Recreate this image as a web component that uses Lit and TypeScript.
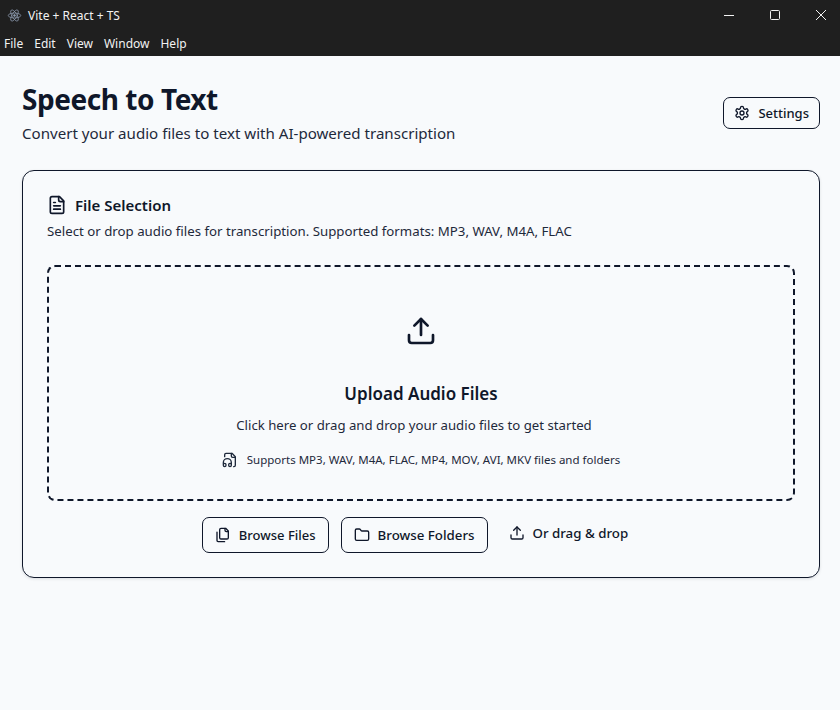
import { LitElement, html, css, svg } from "lit";
import { customElement } from "lit/decorators.js";

const ic = (size: number, body: unknown, sw = 2) => html`<svg xmlns="http://www.w3.org/2000/svg" width=${size} height=${size} viewBox="0 0 24 24" fill="none" stroke="currentColor" stroke-width=${sw} stroke-linecap="round" stroke-linejoin="round">${body}</svg>`;

const upload = svg`<path d="M21 15v4a2 2 0 0 1-2 2H5a2 2 0 0 1-2-2v-4"/><polyline points="17 8 12 3 7 8"/><line x1="12" x2="12" y1="3" y2="15"/>`;
const gear = svg`<path d="M12.22 2h-.44a2 2 0 0 0-2 2v.18a2 2 0 0 1-1 1.73l-.43.25a2 2 0 0 1-2 0l-.15-.08a2 2 0 0 0-2.73.73l-.22.38a2 2 0 0 0 .73 2.73l.15.1a2 2 0 0 1 1 1.72v.51a2 2 0 0 1-1 1.74l-.15.09a2 2 0 0 0-.73 2.73l.22.38a2 2 0 0 0 2.73.73l.15-.08a2 2 0 0 1 2 0l.43.25a2 2 0 0 1 1 1.73V20a2 2 0 0 0 2 2h.44a2 2 0 0 0 2-2v-.18a2 2 0 0 1 1-1.73l.43-.25a2 2 0 0 1 2 0l.15.08a2 2 0 0 0 2.73-.73l.22-.39a2 2 0 0 0-.73-2.73l-.15-.08a2 2 0 0 1-1-1.74v-.5a2 2 0 0 1 1-1.74l.15-.09a2 2 0 0 0 .73-2.73l-.22-.38a2 2 0 0 0-2.73-.73l-.15.08a2 2 0 0 1-2 0l-.43-.25a2 2 0 0 1-1-1.73V4a2 2 0 0 0-2-2z"/><circle cx="12" cy="12" r="3"/>`;
const fileText = svg`<path d="M15 2H6a2 2 0 0 0-2 2v16a2 2 0 0 0 2 2h12a2 2 0 0 0 2-2V7Z"/><path d="M14 2v4a2 2 0 0 0 2 2h4"/><path d="M10 9H8"/><path d="M16 13H8"/><path d="M16 17H8"/>`;
const fileAudio = svg`<path d="M17.5 22h.5a2 2 0 0 0 2-2V7l-5-5H6a2 2 0 0 0-2 2v3"/><path d="M14 2v4a2 2 0 0 0 2 2h4"/><path d="M2 19a2 2 0 1 1 4 0v1a2 2 0 1 1-4 0v-4a6 6 0 0 1 12 0v4a2 2 0 1 1-4 0v-1a2 2 0 1 1 4 0"/>`;
const files = svg`<path d="M20 7h-3a2 2 0 0 1-2-2V2"/><path d="M9 18a2 2 0 0 1-2-2V4a2 2 0 0 1 2-2h7l4 4v10a2 2 0 0 1-2 2Z"/><path d="M3 7.6v12.8A1.6 1.6 0 0 0 4.6 22h9.8"/>`;
const folder = svg`<path d="M20 20a2 2 0 0 0 2-2V8a2 2 0 0 0-2-2h-7.9a2 2 0 0 1-1.69-.9L9.6 3.9A2 2 0 0 0 7.93 3H4a2 2 0 0 0-2 2v13a2 2 0 0 0 2 2Z"/>`;

@customElement("app-root")
export class AppRoot extends LitElement {
  static styles = css`
    :host { display: flex; flex-direction: column; height: 710px; overflow: hidden; background: #f8fafc; color: #0f172a; font-family: "Noto Sans", "Open Sans", sans-serif; }
    .chrome { background: #1f1f1f; color: #f2f2f2; height: 56px; flex: none; font-size: 12px; overflow: hidden; }
    .titlebar { height: 30px; display: flex; align-items: center; padding-left: 7px; }
    .logo { width: 15px; height: 15px; margin-right: 6px; color: #8d9bb0; display: block; }
    .wname { flex: 1; }
    .wc { display: flex; align-items: center; margin-right: -4px; }
    .wc span { width: 46px; height: 30px; display: flex; align-items: center; justify-content: center; }
    .menu { height: 26px; display: flex; align-items: center; padding-left: 4px; gap: 11px; }
    main { padding: 25px 20px 0 22px; }
    .head { display: flex; justify-content: space-between; align-items: flex-start; margin-bottom: 25px; }
    .head .btn { margin-top: 16px; height: 32px; padding: 0 10px; }
    h1 { margin: 0; font-size: 28px; line-height: 36px; font-weight: 700; letter-spacing: -0.45px; }
    .sub { margin-top: 4px; font-size: 15.1px; line-height: 24px; color: #1e293b; }
    .btn { display: inline-flex; align-items: center; gap: 8px; height: 36px; box-sizing: border-box; padding: 0 12px; border: 1px solid #0f172a; border-radius: 7px; background: #f8fafc; font: inherit; font-size: 13px; font-weight: 500; color: #0f172a; }
    .btn.wide { font-size: 13.3px; }
    .card { border: 1px solid #0f172a; border-radius: 12px; height: 408px; box-sizing: border-box; padding: 24px; box-shadow: 0 1px 3px rgba(15,23,42,.12); }
    .ct { display: flex; align-items: center; gap: 8px; font-size: 15px; font-weight: 600; line-height: 20px; }
    .cd { margin-top: 6px; font-size: 13.25px; line-height: 20px; color: #1e293b; }
    .drop { margin-top: 24px; height: 236px; box-sizing: border-box; border: 2px dashed #0f172a; border-radius: 8px; display: flex; flex-direction: column; align-items: center; padding-top: 48px; }
    .drop h3 { margin: 33px 0 0; font-size: 17px; line-height: 28px; font-weight: 600; }
    .drop p { margin: 7px 0 0; padding-right: 14px; font-size: 13.2px; line-height: 20px; color: #1e293b; }
    .sup { display: flex; align-items: center; gap: 9px; margin-top: 17px; font-size: 11.5px; line-height: 16px; color: #1e293b; }
    .actions { display: flex; justify-content: center; align-items: center; gap: 12px; margin-top: 16px; }
    .plain { display: inline-flex; align-items: center; gap: 8px; padding: 0 12px 4px 9px; height: 36px; box-sizing: border-box; font-size: 13.3px; font-weight: 500; }
  `;
  render() {
    return html`
      <div class="chrome">
        <div class="titlebar">
          <svg class="logo" viewBox="0 0 24 24" fill="none" stroke="currentColor" stroke-width="1.2">
            <ellipse cx="12" cy="12" rx="10" ry="4"/>
            <ellipse cx="12" cy="12" rx="10" ry="4" transform="rotate(60 12 12)"/>
            <ellipse cx="12" cy="12" rx="10" ry="4" transform="rotate(120 12 12)"/>
            <circle cx="12" cy="12" r="1.5" fill="currentColor"/>
          </svg>
          <span class="wname">Vite + React + TS</span>
          <div class="wc">
            <span><svg width="12" height="12" viewBox="0 0 12 12"><path d="M1 6.5h10" stroke="#f2f2f2"/></svg></span>
            <span><svg width="12" height="12" viewBox="0 0 12 12" fill="none"><rect x="1.5" y="1.5" width="9" height="9" rx="1" stroke="#f2f2f2"/></svg></span>
            <span><svg width="12" height="12" viewBox="0 0 12 12"><path d="M1 1l10 10M11 1L1 11" stroke="#f2f2f2"/></svg></span>
          </div>
        </div>
        <div class="menu"><span>File</span><span>Edit</span><span>View</span><span>Window</span><span>Help</span></div>
      </div>
      <main>
        <div class="head">
          <div>
            <h1>Speech to Text</h1>
            <div class="sub">Convert your audio files to text with AI-powered transcription</div>
          </div>
          <button class="btn">${ic(16, gear)}Settings</button>
        </div>
        <section class="card">
          <div class="ct">${ic(20, fileText)}File Selection</div>
          <div class="cd">Select or drop audio files for transcription. Supported formats: MP3, WAV, M4A, FLAC</div>
          <div class="drop">
            ${ic(32, upload)}
            <h3>Upload Audio Files</h3>
            <p>Click here or drag and drop your audio files to get started</p>
            <div class="sup">${ic(16, fileAudio)}Supports MP3, WAV, M4A, FLAC, MP4, MOV, AVI, MKV files and folders</div>
          </div>
          <div class="actions">
            <button class="btn">${ic(16, files)}Browse Files</button>
            <button class="btn wide">${ic(16, folder)}Browse Folders</button>
            <span class="plain">${ic(16, upload)}Or drag &amp; drop</span>
          </div>
        </section>
      </main>
    `;
  }
}
